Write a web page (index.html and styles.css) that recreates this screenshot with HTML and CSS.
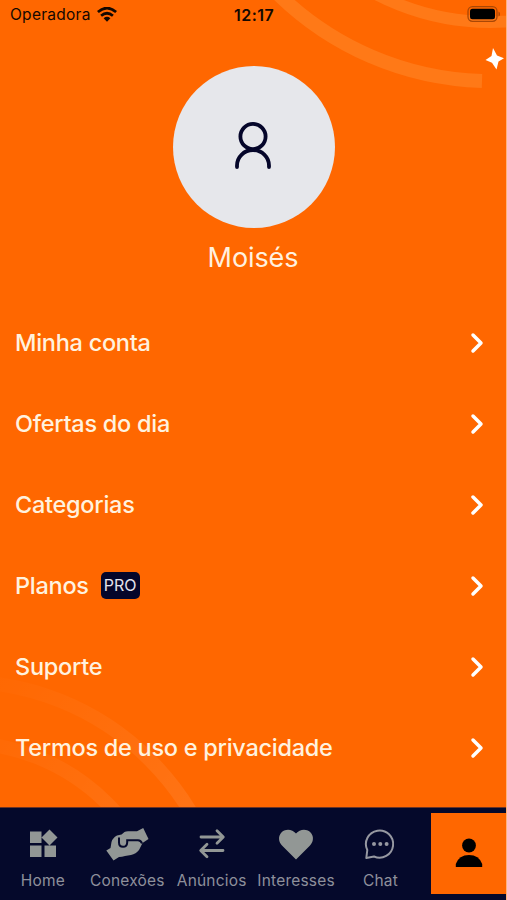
FILE: index.html
```html
<!DOCTYPE html>
<html lang="pt-BR">
<head>
<meta charset="utf-8">
<title>Perfil</title>
<link rel="stylesheet" href="styles.css">
</head>
<body>
<div class="screen">
  <svg class="backdrop" viewBox="0 0 507 807" fill="none">
    <defs>
      <linearGradient id="fade" gradientUnits="userSpaceOnUse" x1="0" y1="680" x2="190" y2="805">
        <stop offset="0" stop-color="#fff" stop-opacity=".01"/>
        <stop offset="1" stop-color="#fff" stop-opacity=".08"/>
      </linearGradient>
    </defs>
    <path d="M482 81A305 305 0 0 1 276 -8" stroke="#ff7917" stroke-width="14"/>
    <circle cx="490" cy="-224" r="246" stroke="#ff7917" stroke-width="12"/>
    <g stroke="url(#fade)" stroke-width="14">
      <circle cx="-39.500" cy="949.500" r="268"/>
      <circle cx="-39.500" cy="949.500" r="207"/>
    </g>
    <path d="M493 48 497 55.500 504 58.200 498.500 61.500 496.500 69.500 492 62.800 485.500 60 491.500 56Z" fill="#fff"/>
  </svg>

  <header class="status">
    <div class="carrier"><span>Operadora</span>
      <svg width="20" height="15" viewBox="0 0 20 15" fill="none" stroke="#140800" stroke-width="2.700">
        <path d="M.9 5.100Q10-2.900 19.100 5.100"/><path d="M4.100 8.800Q10 3.700 15.900 8.800"/>
        <path d="M10 14.700 6.600 11.300Q10 8.400 13.400 11.300Z" fill="#140800" stroke="none"/>
      </svg>
    </div>
    <time>12:17</time>
    <svg class="battery" width="34" height="16" viewBox="0 0 34 16">
      <rect x="1" y=".7" width="29" height="14.600" rx="4.500" fill="none" stroke="#a94705" stroke-width="1.300"/>
      <rect x="3" y="2.800" width="25" height="10.500" rx="2.500"/>
      <path d="M31.500 5.500Q33 6 33 8T31.500 10.500Z" fill="#a94705"/>
    </svg>
  </header>

  <section class="profile">
    <div class="avatar">
      <svg width="38" height="50" viewBox="0 0 38 50" fill="none" stroke="#05062a" stroke-width="3.800" stroke-linecap="round">
        <circle cx="19" cy="15.500" r="12.600"/><path d="M3 46V44.500A16 15.500 0 0 1 35 44.500V46"/>
      </svg>
    </div>
    <h1>Moisés</h1>
  </section>

  <nav class="menu">
    <a><span>Minha conta</span><svg class="chevron" viewBox="0 0 14 22"><path d="M3 3 11 11 3 19"/></svg></a>
    <a><span>Ofertas do dia</span><svg class="chevron" viewBox="0 0 14 22"><path d="M3 3 11 11 3 19"/></svg></a>
    <a><span>Categorias</span><svg class="chevron" viewBox="0 0 14 22"><path d="M3 3 11 11 3 19"/></svg></a>
    <a><span>Planos</span><span class="pro">PRO</span><svg class="chevron" viewBox="0 0 14 22"><path d="M3 3 11 11 3 19"/></svg></a>
    <a><span>Suporte</span><svg class="chevron" viewBox="0 0 14 22"><path d="M3 3 11 11 3 19"/></svg></a>
    <a><span>Termos de uso e privacidade</span><svg class="chevron" viewBox="0 0 14 22"><path d="M3 3 11 11 3 19"/></svg></a>
  </nav>

  <footer class="tabs">
    <a><svg width="44" height="36" viewBox="0 0 44 36" fill="#929795">
      <path d="M9 5.500H20.500V17H9ZM9 19.500H20.500V31H9ZM23.500 19.500H35V31H23.500ZM28.500 3.500 36.500 11.500 28.500 19.500 20.500 11.500Z"/></svg><span>Home</span></a>
    <a><svg width="44" height="36" viewBox="0 0 44 36" fill="#929795">
      <path d="M1.300 24.500 5.500 22 6.500 16Q7.500 12 12 9.500L16.500 8.500 19.500 6Q21 5 24 5.200L32 5.300 38.200 2 43.500 13 37.500 17 34 24Q31 28 26 29L20 30Q17 31 14 31L8.500 34.500Z"/>
      <path d="M14 11.500V16.500Q14 20.800 18 20.800T22.200 16.500V14.300H33Q36 14.300 37 17.500" fill="none" stroke="#05092b" stroke-width="2"/></svg><span>Conexões</span></a>
    <a><svg width="44" height="36" viewBox="0 0 44 36" fill="none" stroke="#929795" stroke-width="2.800" stroke-linecap="round" stroke-linejoin="round">
      <path d="M11 11H33M27 4.700 33.300 11 27 17.300M33 24.500H11M17 18.200 10.700 24.500 17 30.800"/></svg><span>Anúncios</span></a>
    <a><svg width="44" height="36" viewBox="0 0 44 36" fill="#929795">
      <path d="M22 33.500 8 19.500C4.500 16 4 10.500 7 7 10.500 2.500 18 2.500 22 7.500 26 2.500 33.500 2.500 37 7 40 10.500 39.500 16 36 19.500Z"/></svg><span>Interesses</span></a>
    <a><svg width="44" height="36" viewBox="0 0 44 36" fill="none" stroke="#9698a1" stroke-width="2" stroke-linejoin="round">
      <path d="M8.300 32 9.300 24A13.600 13.600 0 1 1 16 30.500Z"/><g fill="#9698a1" stroke="none"><circle cx="16" cy="18" r="2"/><circle cx="22.300" cy="18" r="2"/><circle cx="28.600" cy="18" r="2"/></g></svg><span>Chat</span></a>
    <a class="current"><svg width="28" height="30" viewBox="0 0 28 30">
      <circle cx="14" cy="7.500" r="6.900"/><path d="M.8 29V26Q4 17 14 17T27.200 26V29Z"/></svg></a>
  </footer>
</div>
</body>
</html>
```

FILE: styles.css
```css
* { box-sizing: border-box; }
body {
  margin: 0;
  background: #ff6700;
  font-family: Inter, "Liberation Sans", sans-serif;
}
.screen {
  position: relative;
  width: 507px;
  height: 900px;
  overflow: hidden;
  display: flex;
  flex-direction: column;
  background: #ff6700;
  border-right: 1px solid #ffb27e;
}
.backdrop {
  position: absolute;
  top: 0;
  left: 0;
  width: 507px;
  height: 807px;
}
.status, .profile, .menu, .tabs { position: relative; }
.status {
  height: 30px;
  display: grid;
  grid-template-columns: 224px auto 1fr;
  align-items: center;
  padding: 0 5px 2px 10px;
  color: #140800;
}
.carrier { display: flex; gap: 6px; font-size: 15.5px; letter-spacing: .27px; }
.carrier svg { margin-top: 2px; }
time { padding-top: 1px; font-size: 16px; font-weight: 600; letter-spacing: .5px; }
.battery { justify-self: end; }
.profile { height: 272px; padding-top: 36px; }
.avatar {
  width: 162px;
  height: 162px;
  margin: 0 auto 0 173px;
  border-radius: 50%;
  background: #e6e7eb;
  display: flex;
  align-items: center;
  justify-content: center;
}
.avatar svg { margin: 0 2px 2px 0; }
h1 {
  margin: 12px 0 0;
  color: #fff0df;
  font-size: 27px;
  line-height: 36px;
  font-weight: 400;
  letter-spacing: -.1px;
  text-align: center;
}
.menu { height: 505px; flex: none; }
.menu a {
  height: 81px;
  padding: 0 22px 0 15px;
  display: flex;
  align-items: center;
  color: #fff2df;
  font-size: 23.5px;
  font-weight: 500;
  letter-spacing: -.27px;
  white-space: nowrap;
}
.menu .pro {
  width: 39px;
  height: 27px;
  margin-left: 12px;
  border-radius: 5px;
  background: #05062a;
  color: #e3e3ec;
  font-size: 16px;
  line-height: 27px;
  font-weight: 400;
  letter-spacing: 0;
  text-align: center;
}
.chevron {
  width: 14px;
  height: 22px;
  margin-left: auto;
  fill: none;
  stroke: #fff;
  stroke-width: 3.5;
  stroke-linecap: round;
  stroke-linejoin: round;
}
.tabs {
  height: 93px;
  flex: none;
  display: grid;
  grid-template-columns: repeat(5, 84.4px) 1fr;
  padding: 5px 0 6px .7px;
  background: #05092b;
  border-top: 1px solid #6c3424;
  color: #8e909b;
  font-size: 15.5px;
}
.tabs a {
  display: flex;
  flex-direction: column;
  align-items: center;
  padding-top: 13px;
  white-space: nowrap;
}
.tabs a span { margin-top: 9px; line-height: 20px; letter-spacing: .2px; }
.tabs .current {
  margin-left: 8px;
  padding-top: 25px;
  padding-left: 2px;
  background: #ff6700;
}
```
